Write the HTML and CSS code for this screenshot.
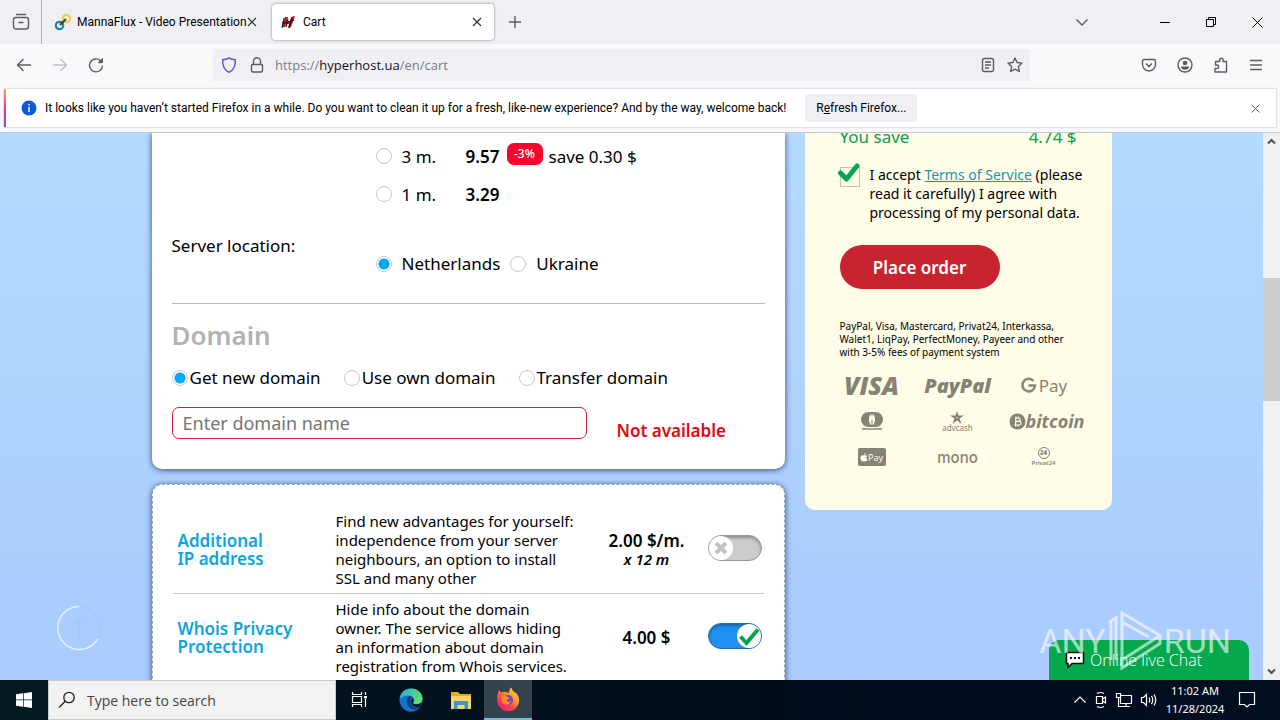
FILE: index.html
```html
<!DOCTYPE html>
<html lang="en">
<head>
<meta charset="utf-8">
<meta name="viewport" content="width=device-width, initial-scale=1">
<title>Cart</title>
<link rel="stylesheet" href="styles.css">
</head>
<body>
<header class="tabstrip">
  <button class="icon-btn view-btn" aria-label="Firefox View"><svg width="18" height="18" viewBox="0 0 18 18" class="line"><path d="M4 1.500h10M3.500 4.500h11a2 2 0 0 1 2 2v7a2.500 2.500 0 0 1-2.500 2.500H4a2.500 2.500 0 0 1-2.500-2.500v-7a2 2 0 0 1 2-2zM6.500 9.500h5"/></svg></button>
  <div class="tab">
    <svg width="18" height="18" viewBox="0 0 18 18" fill="none" stroke-width="2.200"><circle cx="12.500" cy="5.500" r="3.700" stroke="#f5cf3f"/><circle cx="5.500" cy="12.500" r="3.700" stroke="#1787a5"/><path d="M6 12l6-6" stroke="#444"/></svg>
    <span class="tab-title">MannaFlux - Video Presentation</span>
    <button class="icon-btn close" aria-label="Close tab"><svg width="10" height="10" viewBox="0 0 10 10" class="line dark"><path d="M1 1l8 8M9 1L1 9"/></svg></button>
  </div>
  <div class="tab active">
    <svg width="15" height="15" viewBox="0 0 15 15"><path d="M4 2h3L6 6h3l1-4 4-1-1 3-3 8-3 1 1-4H5l-1 3H1l1-4H1l1-2h1z" fill="#a4202c"/><path d="M3 3L1 13M7 4L5 12M11 3L8 13M1 9l12-4" stroke="#2b1517" stroke-width="1.200"/></svg>
    <span class="tab-title">Cart</span>
    <button class="icon-btn close" aria-label="Close tab"><svg width="10" height="10" viewBox="0 0 10 10" class="line dark"><path d="M1 1l8 8M9 1L1 9"/></svg></button>
  </div>
  <button class="icon-btn new-tab" aria-label="New tab"><svg width="12" height="12" viewBox="0 0 12 12" class="line"><path d="M6 0v12M0 6h12"/></svg></button>
  <div class="window-controls">
    <button class="icon-btn list-tabs" aria-label="List all tabs"><svg width="14" height="14" viewBox="0 0 14 14" class="line"><path d="M1.500 4.500L7 10l5.500-5.500"/></svg></button>
    <button class="icon-btn" aria-label="Minimize"><svg width="10" height="10" viewBox="0 0 10 10" class="line thin"><path d="M0 5.500h10"/></svg></button>
    <button class="icon-btn" aria-label="Restore"><svg width="10" height="10" viewBox="0 0 10 10" class="line thin"><path d="M.5 2.500h7v7h-7zM2.500 2.500v-2h7v7h-2"/></svg></button>
    <button class="icon-btn" aria-label="Close window"><svg width="11" height="11" viewBox="0 0 11 11" class="line thin"><path d="M.5.5l10 10M10.500.5l-10 10"/></svg></button>
  </div>
</header>

<nav class="toolbar">
  <div class="nav-buttons">
    <button class="icon-btn" aria-label="Back"><svg width="16" height="16" viewBox="0 0 16 16" class="line"><path d="M15 8H1.500M7.500 2l-6 6 6 6"/></svg></button>
    <button class="icon-btn faded" aria-label="Forward"><svg width="16" height="16" viewBox="0 0 16 16" class="line"><path d="M1 8h13.500M8.500 2l6 6-6 6"/></svg></button>
    <button class="icon-btn" aria-label="Reload"><svg width="16" height="16" viewBox="0 0 16 16" class="line"><path d="M14.500 8.500A6.500 6.500 0 1 1 12.300 3.500L14 5.200"/><path d="M14.500 1.500v4.200h-4.200z" fill="#5b5b66" stroke-width="1"/></svg></button>
  </div>
  <div class="urlbar">
    <svg width="16" height="16" viewBox="0 0 16 16" class="line shield"><path d="M8 .8c2 1.300 4 1.800 6.300 2C14.500 8.500 13 13 8 15.300 3 13 1.500 8.500 1.700 2.800 4 2.600 6 2.100 8 .8z"/></svg>
    <svg width="16" height="16" viewBox="0 0 16 16" class="line"><path d="M3.500 7.500h9a1 1 0 0 1 1 1v5a1.500 1.500 0 0 1-1.500 1.500H4a1.500 1.500 0 0 1-1.500-1.500v-5a1 1 0 0 1 1-1zM4.500 7.500V4.200a3.500 3.500 0 0 1 7 0v3.300"/></svg>
    <span class="url">https://<b>hyperhost.ua</b>/en/cart</span>
    <button class="icon-btn" aria-label="Reader view"><svg width="14" height="16" viewBox="0 0 14 16" class="line"><path d="M3 1.500h8a1.500 1.500 0 0 1 1.500 1.500v10a1.500 1.500 0 0 1-1.500 1.500H3A1.500 1.500 0 0 1 1.500 13V3A1.500 1.500 0 0 1 3 1.500zM4 5h6M4 8h6M4 11h4"/></svg></button>
    <button class="icon-btn" aria-label="Bookmark"><svg width="16" height="16" viewBox="0 0 16 16" class="line"><path d="M8 1l2.100 4.500 4.900.6-3.600 3.400.9 5L8 12.100l-4.300 2.400.9-5L1 6.100l4.900-.6z" stroke-linejoin="round"/></svg></button>
  </div>
  <div class="nav-right">
    <button class="icon-btn" aria-label="Pocket"><svg width="16" height="16" viewBox="0 0 16 16" class="line"><path d="M3 2.500h10A1.500 1.500 0 0 1 14.500 4v3.500a6.500 6.500 0 0 1-13 0V4A1.500 1.500 0 0 1 3 2.500zM5 6.500l3 3 3-3"/></svg></button>
    <button class="icon-btn" aria-label="Account"><svg width="16" height="16" viewBox="0 0 16 16" class="line"><circle cx="8" cy="8" r="7"/><circle cx="8" cy="6" r="2.300" fill="#5b5b66" stroke="none"/><path d="M4 9.500h8c0 2-1.500 3.300-4 3.300S4 11.500 4 9.500z" fill="#5b5b66" stroke="none"/></svg></button>
    <button class="icon-btn" aria-label="Extensions"><svg width="16" height="16" viewBox="0 0 16 16" class="line"><path d="M2 15h11.500V4.500h-3.300V3a1.800 1.800 0 0 0-3.600 0v1.500H2.500V8H4a1.700 1.700 0 0 1 0 3.500H2z" stroke-linejoin="round"/></svg></button>
    <button class="icon-btn" aria-label="Menu"><svg width="14" height="14" viewBox="0 0 14 14" class="line"><path d="M1 2.500h12M1 7h12M1 11.500h12"/></svg></button>
  </div>
</nav>

<section class="notice-wrap">
  <div class="notice">
    <svg width="16" height="16" viewBox="0 0 16 16"><circle cx="8" cy="8" r="7.500" fill="#0a5bdc"/><path d="M8 7v5M8 4v1.500" stroke="#fff" stroke-width="1.500"/></svg>
    <span class="notice-text">It looks like you haven’t started Firefox in a while. Do you want to clean it up for a fresh, like-new experience? And by the way, welcome back!</span>
    <button class="refresh">R<u>e</u>fresh Firefox...</button>
    <button class="icon-btn notice-close" aria-label="Dismiss"><svg width="9" height="9" viewBox="0 0 9 9" class="line"><path d="M.5.5l8 8M8.500.5l-8 8" stroke-width="1"/></svg></button>
  </div>
</section>

<div class="viewport">
  <main class="page">
    <div class="columns">
      <div class="left">
        <section class="card order">
          <div class="period">
            <input type="radio" name="period" id="p3"><label for="p3">3 m.</label><strong>9.57</strong><span class="badge">-3%</span><span>save 0.30 $</span>
          </div>
          <div class="period">
            <input type="radio" name="period" id="p1"><label for="p1">1 m.</label><strong>3.29</strong>
          </div>
          <div class="location">
            <span class="location-title">Server location:</span>
            <div class="location-options">
              <input type="radio" name="loc" id="nl" checked><label for="nl">Netherlands</label>
              <input type="radio" name="loc" id="ua"><label for="ua">Ukraine</label>
            </div>
          </div>
          <h2 class="domain-title">Domain</h2>
          <div class="domain-kinds">
            <span class="kind"><input type="radio" name="dom" id="d1" checked><label for="d1">Get new domain</label></span>
            <span class="kind"><input type="radio" name="dom" id="d2"><label for="d2">Use own domain</label></span>
            <span class="kind"><input type="radio" name="dom" id="d3"><label for="d3">Transfer domain</label></span>
          </div>
          <div class="domain-row">
            <input class="domain-input" type="text" placeholder="Enter domain name" aria-label="Domain name">
            <span class="not-available">Not available</span>
          </div>
        </section>

        <section class="card extras">
          <div class="extra">
            <label class="extra-title" for="ip">Additional<br>IP address</label>
            <p class="extra-text">Find new advantages for yourself: independence from your server neighbours, an option to install SSL and many other</p>
            <div class="price">2.00 $/m.<em>x 12 m</em></div>
            <div class="switch"><input type="checkbox" id="ip"><svg class="mark" width="26" height="26" viewBox="0 0 26 26"><circle cx="13" cy="13" r="12" fill="#fff"/><path d="M8 8l10 10M18 8L8 18" stroke="#c3c3c3" stroke-width="4"/></svg></div>
          </div>
          <div class="extra">
            <label class="extra-title" for="whois">Whois Privacy<br>Protection</label>
            <p class="extra-text">Hide info about the domain owner. The service allows hiding an information about domain registration from Whois services.</p>
            <div class="price">4.00 $</div>
            <div class="switch"><input type="checkbox" id="whois" checked><svg class="mark" width="26" height="26" viewBox="0 0 26 26"><circle cx="13" cy="13" r="12" fill="#fff"/><path d="M4.500 13.500l6 6.500L22 6.500" fill="none" stroke="#07a54c" stroke-width="4"/></svg></div>
          </div>
        </section>
      </div>

      <aside class="summary">
        <div class="save"><span>You save</span><span>4.74 $</span></div>
        <div class="terms">
          <span class="agree"><input type="checkbox" id="agree" checked><svg class="tick" width="24" height="22" viewBox="0 0 24 22"><path d="M3.500 11l6 6L20 4" fill="none" stroke="#04a651" stroke-width="5" stroke-linecap="round" stroke-linejoin="round"/></svg></span>
          <label for="agree">I accept <a href="#">Terms of Service</a> (please read it carefully) I agree with processing of my personal data.</label>
        </div>
        <button class="place">Place order</button>
        <p class="fees">PayPal, Visa, Mastercard, Privat24, Interkassa, Walet1, LiqPay, PerfectMoney, Payeer and other with 3-5% fees of payment system</p>
        <div class="payments">
          <span class="visa">VISA</span>
          <span class="paypal">PayPal</span>
          <span class="gpay"><svg width="17" height="17" viewBox="0 0 17 17" fill="none" stroke="#8a8878" stroke-width="2.600"><path d="M13.500 4A6.300 6.300 0 1 0 15 8.500H8.500"/></svg>Pay</span>
          <svg width="22" height="20" viewBox="0 0 22 20" fill="#858374"><path d="M7.500 1h7a7.500 7.500 0 0 1 0 15h-7a7.500 7.500 0 0 1 0-15z"/><path d="M10.500 3C7 4.500 7 12.500 10.500 14zM11.500 3c3.500 1.500 3.500 9.500 0 11V9h-1V5h1z" fill="#fffde7"/><path d="M1 18h20" stroke="#858374" stroke-width="1.500"/></svg>
          <span class="advcash"><svg width="16" height="13" viewBox="0 0 16 13"><path d="M8 0l1.500 4.500H15L10.500 7.500 12.500 13 8 9.500 3.500 13l2-5.500L1 4.500h5.500z" fill="#858374"/><path d="M7 6h2L8 7.500z" fill="#fffde7"/></svg>advcash</span>
          <span class="bitcoin"><svg width="17" height="17" viewBox="0 0 17 17"><circle cx="8.500" cy="8.500" r="8" fill="#858374"/><path d="M6 5h3.500a1.700 1.700 0 0 1 0 3.400H6.500h3.700a1.800 1.800 0 0 1 0 3.600H5.500M7 3.500L6.500 13.500M9.500 3.500v1.500M9 12v1.500" fill="none" stroke="#fffde7" stroke-width="1.200"/></svg>bitcoin</span>
          <span class="applepay"><svg width="8" height="9" viewBox="0 0 8 9" fill="#fffde7"><path d="M4 2.500C2 1.500.3 2.800.5 5c.2 2 1.300 3.500 2.300 3.500L4 8.200l1.200.3c1 0 1.800-1 2.200-2.200C6 5.500 6 3.800 7.200 3 6.500 2 5 2 4 2.500zM4 2c0-1 .6-1.700 1.500-2 .1 1-.5 1.800-1.500 2z"/></svg>Pay</span>
          <span class="mono">mono</span>
          <span class="privat"><b>24</b>Privat24</span>
        </div>
      </aside>
    </div>
    <svg class="to-top" width="46" height="46" viewBox="0 0 46 46" fill="none"><circle cx="23" cy="23" r="21.500" stroke="#a3c6fb"/><path d="M23 1.500a21.500 21.500 0 1 0 19 32" stroke="#e8f2ff" stroke-width="1.500"/><path d="M23 35V13M16 20l7-7 7 7" stroke="#a5c9fc" stroke-width="2"/></svg>
    <button class="chat"><svg width="20" height="18" viewBox="0 0 20 18"><path d="M1.500 1.500h17v11H7l-4 4v-4H1.500z" fill="#fff" stroke="#111" stroke-width="1.500"/><path d="M5 7h2M9 7h2M13 7h2" stroke="#111" stroke-width="2"/></svg>Online live Chat</button>
    <div class="watermark" aria-hidden="true"><span>ANY</span><svg width="56" height="62" viewBox="0 0 56 62" fill="none" stroke="#fff" stroke-width="3"><path d="M9 50V8l-5 3v39M15 12v38l38-24.500L15 3v9l27 15M15 50v8l38-24.500v-8"/></svg><span>RUN</span></div>
  </main>
  <div class="scrollbar">
    <svg width="17" height="17" viewBox="0 0 17 17" class="arrow"><path d="M5 10.500L8.500 7l3.500 3.500"/></svg>
    <div class="track"><div class="thumb"></div></div>
    <svg width="17" height="17" viewBox="0 0 17 17" class="arrow"><path d="M5 6.500L8.500 10 12 6.500"/></svg>
  </div>
</div>

<footer class="taskbar">
  <button class="task start" aria-label="Start"><svg width="16" height="16" viewBox="0 0 16 16" fill="#fff"><path d="M0 2.300l7-1v6.300H0zM7.700 1.200L16 0v7.600H7.700zM0 8.300h7v6.400l-7-1zM7.700 8.300H16V16l-8.300-1.200z"/></svg></button>
  <label class="search"><svg width="18" height="18" viewBox="0 0 18 18" fill="none" stroke="#222" stroke-width="1.300"><circle cx="11" cy="6.500" r="5.200"/><path d="M7.200 10.300L1 16.500"/></svg><input type="text" placeholder="Type here to search" aria-label="Search"></label>
  <button class="task" aria-label="Task view"><svg width="18" height="18" viewBox="0 0 18 18" fill="none" stroke="#fff" stroke-width="1.200"><path d="M1.500 1v2.500h9V1M1.500 5.500h9v6h-9zM1.500 16v-2.500h9V16M14.500 1v3M14.500 8v8"/><path d="M13 5h3v2.500h-3z" fill="#fff" stroke="none"/></svg></button>
  <button class="task wide" aria-label="Edge"><svg width="24" height="24" viewBox="0 0 24 24"><defs><linearGradient id="edge" x1="0" y1="0" x2="1" y2="0.300"><stop offset="0" stop-color="#25a7e8"/><stop offset="1" stop-color="#5fe06a"/></linearGradient></defs><circle cx="12" cy="12" r="11.500" fill="#1474ca"/><path d="M.6 11C1.500 4.500 6.500.5 12 .5c7 0 11.500 5 11.500 10 0 4-3 5.700-6 5.700-3.500 0-4-1.400-3-2.700 1.500-3-1-6-4.500-6C6 7.500 2 9 .6 11z" fill="url(#edge)"/><path d="M10 8c-3 2-3.500 8 1 12 3.500 3 8 2 10.500-1.500-4 2-9.500.5-10-5-.1-2 .5-3 1.500-4.500-1-.8-2-1-3-1z" fill="#0d3f86"/><path d="M14.500 13.500c-1 1.300-.5 2.700 3 2.700 2 0 4-.7 5.300-2.300-.3 2-1 3.600-2 5-3.300 1.200-7.500-.5-8.500-4.400-.5-2 1-4.500 1.500-4.500 1 1 1.500 2.200.7 3.500z" fill="#021a23"/></svg></button>
  <button class="task narrow" aria-label="File Explorer"><svg width="22" height="20" viewBox="0 0 22 20"><path d="M1 2h7l2 2h11v14H1z" fill="#eda725"/><path d="M1 6h20v13H1z" fill="#fcd462"/><path d="M4 11h14v8h-3.500v-4h-7v4H4z" fill="#3f94d1"/></svg></button>
  <button class="task current" aria-label="Firefox"><svg width="24" height="24" viewBox="0 0 24 24"><defs><linearGradient id="fox" x1="1" y1="0" x2="0.200" y2="1"><stop offset="0" stop-color="#fff04d"/><stop offset="0.400" stop-color="#ff9a24"/><stop offset="0.700" stop-color="#ff3f4b"/><stop offset="1" stop-color="#d61f86"/></linearGradient></defs><path d="M2 6c.5-2 1-2.500 1.500-3 .3 1 .8 2 1.500 2.500 1-.7 2.500-1 4-.8L13 6c.3-3 1-4.500 2.500-5.500.3 2.500 2 3.500 3 5 1-.2 1.500.3 2 1 2.500 3 3.200 7 2 10.500A11 11 0 0 1 1.500 16C.5 12 .8 9 2 6z" fill="url(#fox)"/><circle cx="12" cy="13" r="5" fill="#7b3fd6"/><path d="M5 9c3-2 5-1 6 .8 1.500.2 2.500.3 2.500 1.200 0 1-2.500 1-3 2.500 1 1.500 3 1.500 4.500.5-.5 3-4 4.500-7 3S5 12 5 9z" fill="#ff8a1f"/></svg></button>
  <div class="tray">
    <svg width="14" height="10" viewBox="0 0 14 10" class="tray-ico"><path d="M1.500 7.500L7 2l5.500 5.500"/></svg>
    <svg width="14" height="18" viewBox="0 0 14 18" class="tray-ico"><path d="M2.500 5.500h6v7h-6zM8.500 8l3-2v6l-3-2M3 2.500Q6.500.5 10 2.500M3 15.500q3.500 2 7 0"/></svg>
    <svg width="18" height="16" viewBox="0 0 18 16" class="tray-ico"><path d="M5.500 3.500h11v8h-11zM11 11.500v3M7 14.500h8M1.500 1.500h4v4h-4zM3.500 5.500v9H7"/></svg>
    <svg width="18" height="16" viewBox="0 0 18 16" class="tray-ico"><path d="M1.500 5.500h2l3-3v11l-3-3h-2zM9 5.500q1.500 2.500 0 5M11.500 4q2.500 4 0 8M14 2.500q3.500 5.500 0 11"/></svg>
    <div class="clock"><span>11:02 AM</span><span>11/28/2024</span></div>
    <svg width="18" height="18" viewBox="0 0 18 18" class="tray-ico note"><path d="M1.500 1.500h15v12h-5L9 16l-2.500-2.500h-5z"/></svg>
  </div>
</footer>
</body>
</html>
```
FILE: styles.css
```css
* { box-sizing: border-box; }
body {
  margin: 0;
  height: 100vh;
  display: flex;
  flex-direction: column;
  overflow: hidden;
  font-family: "Noto Sans", "Open Sans", sans-serif;
  color: #000;
}
button, input { font-family: inherit; }
button { border: 0; padding: 0; background: none; color: inherit; }
svg { flex: none; display: block; }

.line { fill: none; stroke: #5b5b66; stroke-width: 1.400; }
.line.dark { stroke: #33333d; stroke-width: 1.200; }
.line.thin { stroke: #000; stroke-width: 1; }
.icon-btn { display: flex; align-items: center; justify-content: center; flex: none; }

.tabstrip, .notice { font-family: Roboto, sans-serif; }
.toolbar { font-family: "Open Sans", sans-serif; }

/* Tab strip */
.tabstrip { flex: none; height: 44px; display: flex; align-items: center; background: #f0f0f4; font-size: 12px; }
.view-btn { width: 42px; height: 44px; border-right: 1px solid #b0b0b8; }
.tab { width: 218px; height: 36px; margin-left: 8px; padding: 0 11px 0 4px; display: flex; align-items: center; gap: 5px; border-radius: 4px; }
.tab.active { width: 222px; margin-left: 4px; padding: 0 12px 0 9px; gap: 7px; background: #fff; box-shadow: 0 0 3px rgba(0, 0, 0, .45); }
.tab-title { flex: 1; min-width: 0; white-space: nowrap; }
.close { width: 10px; height: 16px; }
.new-tab { margin-left: 15px; }
.window-controls { margin-left: auto; display: flex; align-items: center; }
.window-controls .icon-btn { width: 46px; height: 44px; }
.window-controls .list-tabs { margin-right: 37px; }

/* Toolbar */
.toolbar { flex: none; height: 44px; display: flex; align-items: center; background: #f9f9fb; }
.nav-buttons { width: 213px; margin-top: -2px; padding-left: 16px; display: flex; gap: 20px; }
.faded { opacity: .35; }
.urlbar { flex: 1; height: 32px; margin-top: -3px; padding: 0 7px 0 8px; display: flex; align-items: center; gap: 12px; background: #f0f0f4; }
.urlbar svg + svg { margin-right: -2px; }
.shield { stroke: #5b50d0; }
.url { flex: 1; font-size: 13px; color: #7c7c86; }
.url b { font-weight: 400; color: #15141a; }
.nav-right { width: 250px; margin-top: -2px; padding-right: 17px; display: flex; justify-content: flex-end; gap: 20px; }

/* Notification */
.notice-wrap { flex: none; height: 45px; padding: 1px 4px 6px; background: #f9f9fb; border-bottom: 1px solid #c4c6cc; }
.notice { height: 38px; display: flex; align-items: center; padding: 0 16px 0 15px; background: #fff; border-left: 2px solid; border-image: linear-gradient(#ffab5a, #e0409a, #8a4bd0) 1; box-shadow: 0 0 2px rgba(0, 0, 0, .3); font-size: 12px; }
.notice-text { margin: 0 19px 0 8px; white-space: nowrap; }
.refresh { width: 112px; height: 28px; border-radius: 4px; background: #f0f0f4; font-size: 12px; }
.notice-close { margin-left: auto; }

/* Web page */
.viewport { flex: 1; min-height: 0; display: flex; }
.page { flex: 1; position: relative; overflow: hidden; background: linear-gradient(#b4dbff, #aaccff 90%); }
.columns { max-width: 960px; margin: 0 auto; display: flex; align-items: flex-start; gap: 20px; }
.left { flex: 1; display: flex; flex-direction: column; gap: 15px; }
.card { background: #fff; box-shadow: 0 1px 6px rgba(0, 20, 50, .7); }
.order { padding: 4px 20px 30px; border-radius: 0 0 10px 10px; font-size: 17px; }

input[type="radio"] {
  appearance: none;
  flex: none;
  width: 16px;
  height: 16px;
  margin: 0;
  border: 1px solid #c8c8c8;
  border-radius: 50%;
  background: #fff;
}
input[type="radio"]:checked { background: radial-gradient(circle, #03a9f4 5px, #fff 6px); }

.period { height: 38px; padding-left: 204px; display: flex; align-items: center; }
.period label { width: 64px; margin-left: 10px; }
.period strong { width: 41px; font-weight: 600; }
.badge { width: 36px; height: 22px; margin: 0 6px 4px 0; border-radius: 7px; background: #f7052f; color: #fff; font-size: 12px; font-weight: 500; line-height: 22px; text-align: center; }
.location { display: flex; align-items: flex-start; height: 91px; padding-top: 21px; border-bottom: 1px solid #bbb; }
.location-title { width: 204px; line-height: 24px; }
.location-options { display: flex; align-items: center; margin-top: 18px; line-height: 24px; }
.location-options label { margin: 0 10px; }
.domain-title { margin: 13px 0 0; font-size: 26px; line-height: 36px; font-weight: 600; color: #b3b3b3; }
.domain-kinds { display: flex; gap: 23px; margin-top: 12px; line-height: 26px; }
.kind { display: flex; align-items: center; gap: 2px; }
.domain-row { display: flex; align-items: flex-start; gap: 30px; margin-top: 16px; }
.domain-input { width: 415px; height: 32px; padding: 0 10px; border: 1px solid #d02030; border-radius: 7px; font-size: 18px; background: #fff; }
.domain-input::placeholder { color: #757575; }
.not-available { margin-bottom: -4px; padding-top: 12px; line-height: 24px; font-weight: 600; color: #e30613; }

.extras { padding: 27px 20px; border: 1px dashed #90a4b8; border-radius: 10px; }
.extra { display: grid; grid-template-columns: 158px 246px 1fr 54px; align-items: center; padding: 0 2px 5px 5px; border-bottom: 1px solid #c8c8c8; }
.extra + .extra { padding-top: 6px; border-bottom: 0; }
.extra-title { font-size: 17px; line-height: 18px; font-weight: 600; color: #0ba5e0; }
.extra-text { margin: 0; padding-right: 5px; font-size: 15px; line-height: 19px; }
.price { padding-left: 4px; text-align: center; font-size: 17px; line-height: 18px; font-weight: 600; }
.price em { display: block; font-size: 15px; line-height: 18px; }
.switch { display: grid; align-items: center; padding-bottom: 4px; }
.switch input { grid-area: 1 / 1; appearance: none; width: 54px; height: 26px; margin: 0; border: 1px solid #999; border-radius: 13px; background: #ccc; box-shadow: inset 0 2px 3px rgba(0, 0, 0, .3); }
.switch input:checked { border-color: #2b6ca8; background: #2090f0; }
.mark { grid-area: 1 / 1; pointer-events: none; z-index: 1; }
.switch input:checked + .mark { justify-self: end; }

/* Order summary */
.summary { width: 307px; height: 377px; flex: none; padding: 0 35px; border-radius: 0 0 10px 10px; background: #fffde7; }
.save { display: flex; justify-content: space-between; margin-top: -8px; line-height: 24px; font-size: 17px; color: #07a04c; }
.terms { display: flex; gap: 10px; margin-top: 16px; font-size: 14px; line-height: 19px; }
.terms label { flex: 1; margin-right: -12px; }
.terms a { color: #1595b8; }
.agree { position: relative; width: 20px; }
.agree input { appearance: none; display: block; width: 20px; height: 20px; margin: 2px 0 0; border: 1px solid #c6bfae; }
.tick { position: absolute; left: -3px; top: -3px; pointer-events: none; }
.place { display: block; width: 160px; height: 44px; margin-top: 23px; border-radius: 22px; background: #c7242f; color: #fff; font-size: 17px; font-weight: 600; }
.fees { margin: 31px 0 0; font-size: 10px; line-height: 13px; }
.payments { margin: 8px -11px 0; display: grid; grid-template-columns: repeat(3, 86px); grid-auto-rows: 36px; align-items: center; justify-items: center; color: #858374; white-space: nowrap; }
.visa { font: italic 800 25px "Open Sans", sans-serif; }
.paypal { font: italic 800 20px "Open Sans", sans-serif; }
.gpay { display: flex; align-items: center; gap: 2px; font-size: 17px; }
.advcash { display: flex; flex-direction: column; align-items: center; font-size: 8px; line-height: 8px; }
.bitcoin { display: flex; align-items: center; padding-left: 6px; font: italic 700 18px "Noto Sans", sans-serif; }
.applepay { width: 28px; height: 18px; display: flex; align-items: center; justify-content: center; border-radius: 2px; background: #858374; color: #fffde7; font-size: 9px; }
.mono { font: 500 15px Inter, sans-serif; }
.privat { display: flex; flex-direction: column; align-items: center; font-size: 6px; line-height: 8px; font-weight: 600; }
.privat b { width: 12px; height: 12px; border: 1px solid; border-radius: 50%; line-height: 10px; text-align: center; }

/* Overlays */
.to-top { position: absolute; left: 56px; bottom: 29px; }
.chat { position: absolute; right: 14px; bottom: 0; width: 200px; height: 40px; padding-left: 16px; display: flex; align-items: center; gap: 5px; border-radius: 10px 10px 0 0; background: #05a94d; color: #fff; font-family: "Open Sans", sans-serif; font-size: 16px; font-weight: 300; }
.watermark { position: absolute; right: 32px; bottom: 8px; display: flex; align-items: center; gap: 1px; color: #fff; opacity: .6; pointer-events: none; font: 400 34px Roboto, sans-serif; }

.scrollbar { width: 17px; display: flex; flex-direction: column; background: #f0f0f0; }
.track { flex: 1; }
.thumb { height: 24%; margin-top: 128px; background: #cdcdcd; }
.arrow { fill: none; stroke: #505050; stroke-width: 2; }

/* Taskbar */
.taskbar { flex: none; height: 40px; display: flex; background: linear-gradient(90deg, #021a20, #020b1c 60%, #030e20); color: #fff; }
.task { width: 48px; display: flex; align-items: center; justify-content: center; }
.task.wide { width: 54px; }
.task.narrow { width: 46px; }
.task.current { background: #33444c; border-bottom: 2px solid #76b9ed; }
.search { width: 288px; display: flex; align-items: center; gap: 11px; padding-left: 9px; background: #f2f2f2; border: 1px solid #ccc; }
.search input { flex: 1; min-width: 0; padding: 0; border: 0; background: none; outline: 0; font-size: 14px; font-family: "Open Sans", sans-serif; }
.search input::placeholder { color: #444; }
.tray { margin-left: auto; padding-right: 24px; display: flex; align-items: center; gap: 7px; }
.tray-ico { fill: none; stroke: #fff; stroke-width: 1.200; }
.clock { width: 60px; display: flex; flex-direction: column; align-items: center; font-size: 11px; line-height: 18px; }
.note { margin-left: 6px; }
```
